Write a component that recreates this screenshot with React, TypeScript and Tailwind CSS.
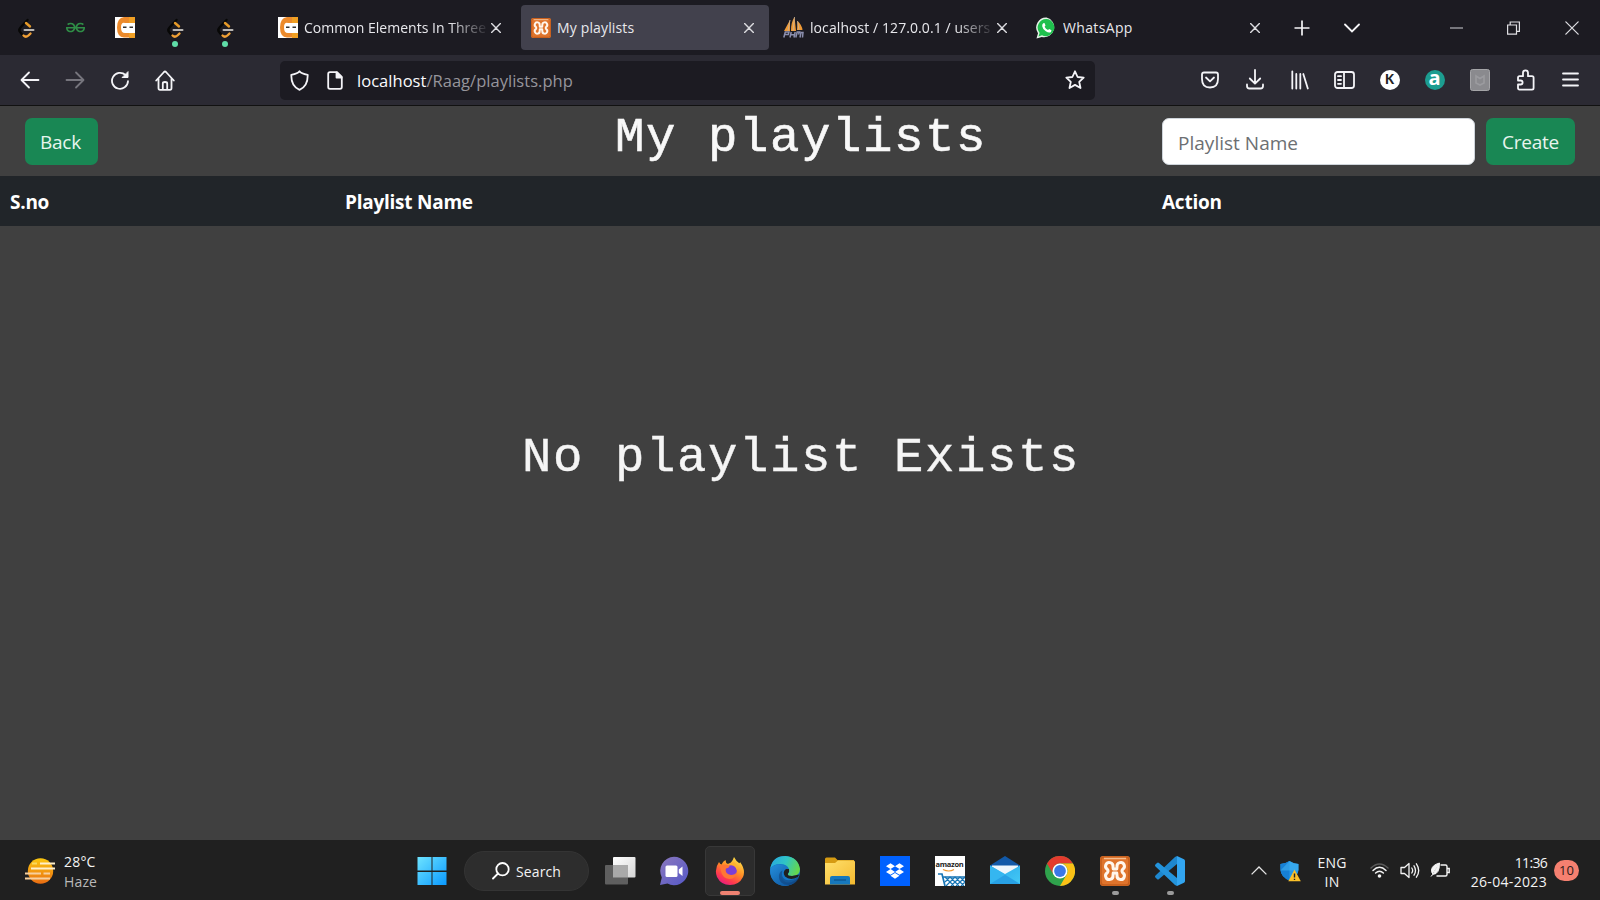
import React from 'react';
import { SiGeeksforgeeks } from 'react-icons/si';
import { FaDropbox } from 'react-icons/fa';

const ui = "font-['Open_Sans','Noto_Sans',sans-serif]";

function LeetCode() {
  return (
    <svg width="20" height="22" viewBox="0 0 20 22" fill="none" strokeLinecap="round" strokeWidth="2.4">
      <path d="M10.500 2 3.500 9.500Q1 12 3.500 14.500L6 17.500" stroke="#070706" />
      <path d="M9 5 13 8.500" stroke="#e69a28" />
      <path d="M6.500 17.500Q9 20 12 17L13.500 15.500" stroke="#f0a036" />
      <path d="M7.500 12H16.500" stroke="#b9b7b5" strokeWidth="2" />
    </svg>
  );
}

function CodingNinjas() {
  return (
    <svg width="20" height="21" viewBox="0 0 20 21">
      <rect width="20" height="21" fill="#fff" />
      <path d="M20 0H9Q2 1 2 10.500T9 20.500H20V16H10Q6 16 6 10.500T10 6H20Z" fill="#ec8a2b" />
      <path d="M14 0H20V6H14ZM14 16H20V21H14Z" fill="#f0a024" />
      <path d="M8 10.300H11.500M14.500 10.300H18" stroke="#333" strokeWidth="1.400" />
    </svg>
  );
}

function Xampp({ size }: { size: number }) {
  return (
    <svg width={size} height={size} viewBox="0 0 30 30">
      <rect width="30" height="30" rx="3" fill="#df742c" />
      <rect x="1" y="1" width="28" height="28" rx="3" fill="none" stroke="#c55d1b" strokeWidth="1.500" />
      <path d="M4 2.500H26" stroke="#f5bd8f" strokeWidth="1.500" />
      <path
        d="M13.200 13H16.800L17 10.500A3.700 3.700 0 1 1 22.700 13.300Q21.300 15 22.700 16.700A3.700 3.700 0 1 1 17 19.500L16.800 17H13.200L13 19.500A3.700 3.700 0 1 1 7.300 16.700Q8.700 15 7.300 13.300A3.700 3.700 0 1 1 13 10.500Z"
        fill="none" stroke="#fff6ec" strokeWidth="3" strokeLinejoin="round"
      />
    </svg>
  );
}

function PhpMyAdmin() {
  return (
    <svg width="21" height="21" viewBox="0 0 21 21">
      <path d="M1 14 7 3V14ZM8 14C8 8 9 4 11.500 0L13 14ZM14 13 14.500 4Q19 8 19.500 13Z" fill="#ef9a36" />
      <path d="M7 3 5 14M11.500 0 10 14M14.500 4 16 13" stroke="#c8b6a0" strokeWidth=".8" />
      <path d="M.8 20.500 2.300 15H6L5.300 17.500H2M7 20.500 8.200 15M11 20.500 12.200 15M7.500 17.700H11.500M12.800 20.500 14.200 15H16.500L15.500 17.500M17 20.500 18 15.500H20L19.500 20.500" fill="none" stroke="#8b8fae" strokeWidth="1.500" />
    </svg>
  );
}

function WhatsApp() {
  return (
    <svg width="21" height="22" viewBox="0 0 21 22">
      <path d="M10.500.500A10 10 0 1 1 5.800 20L.5 21.500 2 16.200A10 10 0 0 1 10.500.500Z" fill="#e6f5e9" />
      <path d="M10.500 2A8.600 8.600 0 1 1 6 18.300L2.500 19.500 3.600 16A8.600 8.600 0 0 1 10.500 2Z" fill="#1fc04d" />
      <path d="M7.200 6.200 8.500 6 9.500 8.500 8.600 9.700Q9.700 12 12 13L13.200 12 15.500 13.200 15 15Q13 16.500 9.800 14.300T6.200 9.200Q6 7.200 7.200 6.200Z" fill="#fff" />
    </svg>
  );
}

function Cross({ size = 10, w = 1.4 }: { size?: number; w?: number }) {
  return (
    <svg width={size} height={size} viewBox="0 0 10 10" stroke="#dcdce0" strokeWidth={w} strokeLinecap="round">
      <path d="M.6.600 9.400 9.400M9.400.600.600 9.400" />
    </svg>
  );
}

function Tab({ icon, title, active, fade, track }: { icon: React.ReactNode; title: string; active?: boolean; fade?: boolean; track: string }) {
  return (
    <div className={`flex h-[45px] w-[248px] shrink-0 items-center rounded-[4px] pl-[9px] pr-[15px] ${active ? 'bg-[#42414d]' : ''}`}>
      <span className="flex w-[21px] shrink-0 justify-center">{icon}</span>
      <span
        className={`ml-[6px] w-[182px] overflow-hidden whitespace-nowrap text-[14px] leading-5 text-[#e8e8ec] ${track} ${fade ? '[mask-image:linear-gradient(to_right,black_80%,transparent_102%)]' : ''}`}
      >
        {title}
      </span>
      <span className="ml-[5px]"><Cross /></span>
    </div>
  );
}

function TabStrip() {
  return (
    <div className="flex h-[55px] shrink-0 items-center bg-[#1c1b22]">
      <div className="ml-px flex h-full">
        <div className="flex w-[50px] items-center justify-center pl-[2px] pt-[2px]"><LeetCode /></div>
        <div className="flex w-[50px] items-center justify-center pr-[2px]"><SiGeeksforgeeks size={19} color="#2f8d46" /></div>
        <div className="flex w-[48px] items-center justify-center"><CodingNinjas /></div>
        {[0, 1].map((i) => (
          <div key={i} className="relative flex w-[50px] items-center justify-center pl-[4px] pt-[2px]">
            <LeetCode />
            <span className="absolute bottom-[8px] left-[23px] size-[6px] rounded-full bg-[#5fdda8]" />
          </div>
        ))}
      </div>
      <div className="ml-[19px] flex gap-[5px]">
        <Tab icon={<CodingNinjas />} title="Common Elements In Three" fade track="tracking-[0.020px]" />
        <Tab icon={<Xampp size={20} />} title="My playlists" active track="tracking-[0.150px]" />
        <Tab icon={<PhpMyAdmin />} title="localhost / 127.0.0.1 / users" fade track="tracking-[0.080px]" />
        <Tab icon={<WhatsApp />} title="WhatsApp" track="tracking-[0.350px]" />
      </div>
      <div className="flex w-[54px] justify-center">
        <svg width="16" height="16" viewBox="0 0 16 16" stroke="#f4f4f6" strokeWidth="1.700"><path d="M8 .5V15.500M.5 8H15.500" /></svg>
      </div>
      <div className="flex w-[46px] justify-center">
        <svg width="16" height="10" viewBox="0 0 16 10" fill="none" stroke="#f4f4f6" strokeWidth="1.800" strokeLinecap="round"><path d="M1 1.500 8 8.500 15 1.500" /></svg>
      </div>
      <div className="ml-auto flex items-center">
        <svg className="mr-[44px]" width="13" height="2"><path d="M0 1H13" stroke="#a9a9ad" strokeWidth="1.300" /></svg>
        <svg className="mr-[45px]" width="13" height="14" viewBox="0 0 13 14" fill="none" stroke="#dedee2" strokeWidth="1.200"><path d="M.6 4H9.500V13.200H.6ZM3.200 4V1H12.400V10.300H9.500" /></svg>
        <span className="mr-[21px]"><Cross size={14} w={0.9} /></span>
      </div>
    </div>
  );
}

function Slot({ w, children }: { w: string; children: React.ReactNode }) {
  return <span className={`flex shrink-0 items-center justify-center ${w}`}>{children}</span>;
}

const line = { fill: 'none', stroke: '#f4f4f8', strokeWidth: 1.8, strokeLinecap: 'round', strokeLinejoin: 'round' } as const;

function Toolbar() {
  return (
    <div className="flex h-[50px] shrink-0 items-center bg-[#2b2a33]">
      <div className="ml-[7px] flex">
        <Slot w="w-[45px]"><svg width="20" height="18" viewBox="0 0 20 18" {...line}><path d="M18.500 9H1.800M9 1.500 1.500 9 9 16.500" /></svg></Slot>
        <Slot w="w-[45px]"><svg width="20" height="18" viewBox="0 0 20 18" {...line} stroke="#76757d"><path d="M1.500 9H18.200M11 1.500 18.500 9 11 16.500" /></svg></Slot>
        <Slot w="w-[45px]">
          <svg width="20" height="20" viewBox="0 0 20 20" {...line} strokeWidth="1.800"><path d="M18 11.200A8 8 0 1 1 15.500 5" /><path d="M18 2V7.500H12.500Z" fill="#f4f4f8" strokeWidth="1" /></svg>
        </Slot>
        <Slot w="w-[45px]">
          <svg width="20" height="21" viewBox="0 0 20 21" {...line}><path d="M1.200 10.500 9 2Q10 1 11 2L18.800 10.500M3.500 8.500V18Q3.500 19.800 5 19.800H15Q16.500 19.800 16.500 18V8.500M7.800 19.500V13.500Q7.800 12 10 12T12.200 13.500V19.500" /></svg>
        </Slot>
      </div>
      <div className="ml-[93px] flex h-[39px] w-[815px] items-center rounded-[5px] bg-[#1c1b22]">
        <Slot w="w-[39px]">
          <svg width="19" height="21" viewBox="0 0 19 21" {...line}><path d="M9.500 1.200Q11 3.500 17.700 4.800Q18 16.500 9.500 19.800Q1 16.500 1.300 4.800Q8 3.500 9.500 1.200Z" /></svg>
        </Slot>
        <Slot w="w-[31px]">
          <svg width="16" height="19" viewBox="0 0 16 19" {...line}><path d="M3 1.200H10L14.800 6V16Q14.800 17.800 13 17.800H3Q1.200 17.800 1.200 16V3Q1.200 1.200 3 1.200Z" /><path d="M9.500 1.500V6.500H14.500Z" fill="#f4f4f8" /></svg>
        </Slot>
        <span className="ml-[7px] whitespace-nowrap pt-[2px] text-[16.500px] tracking-[0.030px] text-[#96959c]">
          <span className="text-[#fbfbfe]">localhost</span>/Raag/playlists.php
        </span>
        <svg className="ml-auto mr-[10px]" width="20" height="20" viewBox="0 0 20 20" {...line}><path d="M10 1.300 12.600 7 18.700 7.600 14.200 11.800 15.500 18 10 14.900 4.500 18 5.800 11.800 1.300 7.600 7.400 7Z" /></svg>
      </div>
      <div className="ml-auto mr-[8px] flex">
        <Slot w="w-[45px]"><svg width="18" height="18" viewBox="0 0 18 18" {...line}><path d="M3 1.500H15Q17 1.500 17 3.500V8Q17 16.500 9 16.500T1 8V3.500Q1 1.500 3 1.500ZM5 6.500 9 10.300 13 6.500" /></svg></Slot>
        <Slot w="w-[45px]"><svg className="-mt-[2px]" width="18" height="21" viewBox="0 0 18 21" {...line}><path d="M9 1V14.500M3.800 9.500 9 14.700 14.200 9.500M1 15.500V17Q1 19.500 3.500 19.500H14.500Q17 19.500 17 17V15.500" /></svg></Slot>
        <Slot w="w-[45px]"><svg width="18" height="20" viewBox="0 0 18 20" {...line}><path d="M1.300 1.300V18.500M5.300 4V18.500M9.300 4V18.500M12.300 4 16.800 18.500" /></svg></Slot>
        <Slot w="w-[45px]"><svg width="21" height="18" viewBox="0 0 21 18" {...line}><rect x="1" y="1" width="19" height="16" rx="2.500" /><path d="M10 1V17M4 5.200H7M4 9H7M4 12.800H7" /></svg></Slot>
        <Slot w="w-[45px]"><span className="flex size-[20px] items-center justify-center rounded-full bg-white font-['Lato',sans-serif] text-[13px] font-black text-[#222]">K</span></Slot>
        <Slot w="w-[45px]"><span className="flex size-[20px] items-center justify-center rounded-full bg-[#1c9d90] pb-[4px] text-[20px] font-bold leading-none text-white">a</span></Slot>
        <Slot w="w-[45px]">
          <svg width="20" height="22" viewBox="0 0 20 22"><rect x=".5" y=".5" width="19" height="21" rx="2" fill="#8a8a8e" stroke="#a5a5a8" /><path d="M6 7V14L10 16 14 14V7L10 9.500Z" fill="none" stroke="#9b9b9f" strokeWidth="1.600" /></svg>
        </Slot>
        <Slot w="w-[46px]">
          <svg width="19" height="22" viewBox="0 0 19 22" {...line}><path d="M7 7.200V3.800Q7 1.300 9.500 1.300T12 3.800V7.200H16Q17.600 7.200 17.600 8.800V19Q17.600 20.600 16 20.600H3.500Q2 20.600 2 19V15.500H4.500Q6.600 15.500 6.600 13.500T4.500 11.500H2V8.800Q2 7.200 3.500 7.200Z" /></svg>
        </Slot>
        <Slot w="w-[44px]"><svg className="-mt-[2px]" width="17" height="15" viewBox="0 0 17 15" {...line}><path d="M1 1.500H16M1 7.500H16M1 13.500H16" /></svg></Slot>
      </div>
    </div>
  );
}

function Page() {
  return (
    <main className="flex min-h-0 flex-1 flex-col border-t border-[#111] bg-[#404040]">
      <header className="grid h-[70px] shrink-0 grid-cols-[1fr_auto_1fr] items-center pl-[25px] pr-[25px]">
        <button className="h-[47px] w-[73px] justify-self-start rounded-[7px] bg-[#198754] pr-[2px] pt-[3px] text-[19px] tracking-[-0.200px] text-[#e8f5ee]">Back</button>
        <h1 className="whitespace-pre pb-[5px] pl-[2px] font-['Liberation_Mono',monospace] text-[49px] leading-none tracking-[1.600px] text-[#f8f8f8] [-webkit-text-stroke:0.6px_#f8f8f8]">My playlists</h1>
        <div className="flex justify-self-end">
          <input placeholder="Playlist Name" className="h-[47px] w-[313px] rounded-[7px] border border-[#ced4da] bg-white px-[15px] pt-[3px] text-[19px] tracking-[0.020px] placeholder:text-[#6c6f72]" />
          <button className="ml-[11px] h-[47px] w-[89px] rounded-[7px] bg-[#198754] pt-[3px] text-[19px] tracking-[-0.200px] text-[#e8f5ee]">Create</button>
        </div>
      </header>
      <div className="grid h-[50px] shrink-0 grid-cols-[335px_817px_1fr] items-center bg-[#212529] pl-[10px] pt-[2px] text-[19px] font-bold tracking-[-0.250px] text-white">
        <span>S.no</span>
        <span>Playlist Name</span>
        <span>Action</span>
      </div>
      <div className="flex flex-1 justify-center pt-[208px]">
        <h2 className="whitespace-pre pl-[2px] font-['Liberation_Mono',monospace] text-[49px] leading-none tracking-[1.600px] text-[#f5f5f5] [-webkit-text-stroke:0.4px_#f5f5f5]">No playlist Exists</h2>
      </div>
    </main>
  );
}

function Firefox() {
  return (
    <svg width="30" height="30" viewBox="0 0 30 30">
      <defs>
        <linearGradient id="fx" x1=".8" y1="0" x2=".2" y2="1"><stop offset="0" stopColor="#ffe84a" /><stop offset=".45" stopColor="#ff8a25" /><stop offset=".75" stopColor="#ff3b4d" /><stop offset="1" stopColor="#e3168c" /></linearGradient>
      </defs>
      <path d="M19 1Q21 5 24 7Q25 7.500 25 6Q31 14 28 21Q24 29 15 29T2 21Q-1 13 4 6Q5 8 6.500 8.500Q8 5 10.500 4Q10.500 7 13 8Q17 7 19 1Z" fill="url(#fx)" />
      <circle cx="16" cy="15" r="5.800" fill="#7b3fd6" />
      <path d="M5 10Q10 7 14.500 10Q14 12 10.500 12.500Q10 18 16 19Q20 19 22 16Q21 23 14.500 23Q7 22 6 15Z" fill="#ff7634" />
      <path d="M13 8Q20 7 22 14Q24 10 19 6Z" fill="#ffb32e" />
    </svg>
  );
}

function Edge() {
  return (
    <svg width="30" height="30" viewBox="0 0 30 30">
      <defs>
        <linearGradient id="eg" x1="0" y1=".2" x2="1" y2=".5"><stop offset="0" stopColor="#28a7df" /><stop offset=".5" stopColor="#30c5c5" /><stop offset="1" stopColor="#65d84c" /></linearGradient>
        <linearGradient id="eb" x1="0" y1="0" x2="1" y2="1"><stop offset="0" stopColor="#258fdc" /><stop offset="1" stopColor="#0a4d96" /></linearGradient>
      </defs>
      <circle cx="15" cy="15" r="15" fill="#1478c9" />
      <path d="M.2 13Q2 0 15.500 0Q28 1 30 13Q30 20 22 20Q17 20 18 17.500Q20 16 19 13Q17 8 10 8Q3 8 .2 13Z" fill="url(#eg)" />
      <path d="M.2 13Q5 7 12 9Q18 10 19 15Q15 11 12 15Q9 20 14 25Q18 28 24 25L27.500 23Q23 30 14 30Q0 28 .2 13Z" fill="url(#eb)" />
      <path d="M12.500 14.500Q10.500 20 15 23.500Q20 26 28.200 21L29 22Q26 28 20 29Q8 29 9 19Q10 15 12.500 14.500Z" fill="#103f78" opacity=".55" />
      <path d="M19 13Q19.500 16 18 17.500Q17 20 22 20L29.300 18.500L28 21Q20 25 15 20.500Q12 16 16 13Z" fill="#202020" />
    </svg>
  );
}

function Chrome() {
  return (
    <svg width="30" height="30" viewBox="0 0 30 30">
      <circle cx="15" cy="15" r="15" fill="#2fa24c" />
      <path d="M2 7.500A15 15 0 0 1 28 7.500H15A7.500 7.500 0 0 0 8.500 18.700Z" fill="#e33b2e" />
      <path d="M28 7.500A15 15 0 0 1 15 30L21.500 18.800A7.500 7.500 0 0 0 15 7.500Z" fill="#fbc116" />
      <circle cx="15" cy="15" r="7.500" fill="#fff" /><circle cx="15" cy="15" r="5.900" fill="#3b78e7" />
    </svg>
  );
}

function Running({ children }: { children: React.ReactNode }) {
  return (
    <span className="relative flex">
      {children}
      <span className="absolute -bottom-[9px] left-[12px] h-[4px] w-[7px] rounded-full bg-[#9b9b9b]" />
    </span>
  );
}

function Taskbar() {
  return (
    <footer className="flex h-[60px] shrink-0 items-center bg-[#202020] pt-px text-[#f4f4f4]">
      <div className="flex w-[414px] items-center pl-[25px]">
        <svg width="31" height="26" viewBox="0 0 31 26">
          <defs><linearGradient id="sun" x1="0" y1="0" x2="0" y2="1"><stop offset="0" stopColor="#fbc70f" /><stop offset="1" stopColor="#e96d13" /></linearGradient></defs>
          <circle cx="15.500" cy="13" r="12.700" fill="url(#sun)" />
          <path d="M15 5.500H30M6 10.500H30" stroke="#fff0ca" strokeWidth="2.200" />
          <path d="M0 15.500H16M18.500 15.500H25M0 20.500H25" stroke="#f7cf9d" strokeWidth="2.200" />
          <path d="M7 5.500H12" stroke="#fbd95d" strokeWidth="2" />
        </svg>
        <div className="ml-[8px] pt-[2px] text-[14px] leading-[20px]">
          <div className="tracking-[0.200px]">28°C</div>
          <div className="tracking-[0.150px] text-[#b9b9b9]">Haze</div>
        </div>
      </div>
      <div className="flex h-full items-center">
        <span className="mr-[14px] flex w-[36px] justify-center">
          <svg width="30" height="30" viewBox="0 0 30 30">
            <defs><linearGradient id="win" gradientUnits="userSpaceOnUse" x1="0" y1="0" x2="30" y2="30"><stop offset="0" stopColor="#70e5ff" /><stop offset="1" stopColor="#0797ff" /></linearGradient></defs>
            <path d="M.5 1H14.500V14.500H.5ZM15.500 1H29.500V14.500H15.500ZM.5 16H14.500V29H.5ZM15.500 16H29.500V29H15.500Z" fill="url(#win)" />
          </svg>
        </span>
        <div className="mr-[3px] flex h-[40px] w-[125px] items-center rounded-full border border-[#343434] bg-[#2d2d2d] pl-[27px]">
          <svg width="18" height="18" viewBox="0 0 18 18" fill="none" stroke="#fff" strokeWidth="1.800" strokeLinecap="round"><circle cx="10.500" cy="7.200" r="6.200" /><path d="M6 11.500 1 16.500" /></svg>
          <span className="ml-[6px] pt-px text-[14px] tracking-[0.120px]">Search</span>
        </div>
        <Slot w="w-[55px]">
          <svg className="ml-px" width="31" height="28" viewBox="0 0 31 28">
            <defs><linearGradient id="tv" x1="0" y1="0" x2="1" y2="1"><stop offset="0" stopColor="#fff" /><stop offset="1" stopColor="#d5d5d5" /></linearGradient></defs>
            <rect x="8" width="22.500" height="20.500" rx="1" fill="url(#tv)" /><rect y="8" width="23" height="19.500" rx="1" fill="#5f5f5f" /><path d="M8 8H23V20.500H8Z" fill="#a9a9a9" />
          </svg>
        </Slot>
        <Slot w="w-[55px]">
          <svg className="-ml-px" width="30" height="30" viewBox="0 0 30 30">
            <defs><linearGradient id="ch" x1="0" y1="0" x2="1" y2="1"><stop offset="0" stopColor="#8b78bd" /><stop offset="1" stopColor="#5558c8" /></linearGradient></defs>
            <path d="M15 .8A14.200 14.200 0 1 1 8.500 27.600L1 29 2.800 21.500A14.200 14.200 0 0 1 15 .8Z" fill="url(#ch)" /><rect x="6.500" y="9.500" width="12" height="11.500" rx="1.500" fill="#fff" /><path d="M19.800 13.500 23.500 10.500V20L19.800 17Z" fill="#fff" />
          </svg>
        </Slot>
        <span className="relative mx-[2.500px] flex size-[50px] items-center justify-center rounded-[5px] border border-[#383838] bg-[#2c2c2c]">
          <Firefox />
          <span className="absolute bottom-0 left-[14px] h-[4px] w-[20px] rounded-full bg-[#ef8272]" />
        </span>
        <Slot w="w-[55px]"><Edge /></Slot>
        <Slot w="w-[55px]">
          <svg width="30" height="28" viewBox="0 0 30 28">
            <defs><linearGradient id="fo" x1="0" y1="0" x2="1" y2="1"><stop offset="0" stopColor="#ffe06c" /><stop offset="1" stopColor="#f4b92f" /></linearGradient></defs>
            <path d="M0 2Q0 .5 1.500.500H10L12.500 3H29V12H0Z" fill="#d69b12" /><path d="M0 6H10L13 3.500H28.500Q30 3.500 30 5V27.500H0Z" fill="url(#fo)" /><path d="M5 27.500V21Q5 19 7 19H23Q25 19 25 21V27.500Z" fill="#1678bd" /><path d="M9 23H21" stroke="#0d548e" strokeWidth="1.300" />
          </svg>
        </Slot>
        <Slot w="w-[55px]"><span className="flex size-[30px] items-center justify-center bg-[#0061fe]"><FaDropbox size={18} color="#fff" /></span></Slot>
        <Slot w="w-[55px]">
          <span className="flex size-[30px] flex-col items-center overflow-hidden bg-white">
            <span className="mt-[3px] text-[7.500px] font-bold leading-[10px] tracking-[-0.300px] text-[#222]">amazon</span>
            <svg width="30" height="17" viewBox="0 0 30 17"><path d="M8 .5Q14 3.500 19 .5" fill="none" stroke="#ef962e" strokeWidth="1.100" /><path d="M3 5H7L10 17M8 8H30" fill="none" stroke="#1976b5" strokeWidth="1.700" /><path d="M10 8 19 17M15 8 24 17M20 8 29 17M25 8 30 13M30 8 21 17M25 8 16 17M20 8 11 17M15 8 10 13M30 13 26 17" stroke="#1976b5" strokeWidth="1.300" /></svg>
          </span>
        </Slot>
        <Slot w="w-[55px]">
          <svg width="30" height="30" viewBox="0 0 30 30">
            <defs><linearGradient id="ml" x1="0" y1="0" x2="1" y2="1"><stop offset="0" stopColor="#2aa9eb" /><stop offset="1" stopColor="#44c9f5" /></linearGradient></defs>
            <path d="M0 9.500 15 0 30 9.500V12H0Z" fill="#1259a8" /><path d="M2 9.500H28V20H2Z" fill="#eef6fc" /><path d="M0 9.500 15 18 30 9.500V28H0Z" fill="url(#ml)" /><path d="M0 9.500 30 28H0Z" fill="#35b6f0" /><path d="M15 18.700 30 28H0Z" fill="#1f92dd" opacity=".6" />
          </svg>
        </Slot>
        <Slot w="w-[55px]"><Chrome /></Slot>
        <Slot w="w-[55px]"><Running><Xampp size={30} /></Running></Slot>
        <Slot w="w-[55px]">
          <Running>
            <svg width="30" height="30" viewBox="0 0 30 30"><path d="M22 8 4 23Q3 24 2 23L.4 21.500Q-.4 20.500.5 19.500L20 1 22 0V8Z" fill="#1e87ce" /><path d="M22 22 4 7Q3 6 2 7L.4 8.500Q-.4 9.500.5 10.500L20 29 22 30V22Z" fill="#2494dc" /><path d="M22 0 29 3.300Q30 4 30 5V25Q30 26 29 26.700L22 30V0Z" fill="#32a5f0" /></svg>
          </Running>
        </Slot>
      </div>
      <div className="ml-auto flex items-center">
        <svg width="16" height="9" viewBox="0 0 16 9" fill="none" stroke="#e5e5e5" strokeWidth="1.300"><path d="M.6 8.400 8 1 15.400 8.400" /></svg>
        <svg className="ml-[13px]" width="21" height="22" viewBox="0 0 21 22">
          <path d="M9.500 1Q13 3.500 18.500 4V10Q18 17 9.500 20.500Q1 17 .5 10V4Q6 3.500 9.500 1Z" fill="#2498e8" /><path d="M9.500 1V20.500Q1 17 .5 10V4Q6 3.500 9.500 1Z" fill="#1680d5" /><path d="M.5 10.500H18.500V4Q13 3.500 9.500 1" fill="#48b8f4" opacity=".5" /><path d="M14.500 9.500 20.800 21.200H8.300Z" fill="#fbc129" /><path d="M14.500 13.500V17.500M14.500 18.700V20" stroke="#222" strokeWidth="1.400" />
        </svg>
        <div className="ml-[13px] w-[36px] pt-[2px] text-center text-[14px] leading-[19px] tracking-[0.150px]"><div>ENG</div><div>IN</div></div>
        <svg className="ml-[20px]" width="19" height="16" viewBox="0 0 19 16" fill="none" stroke="#f4f4f4" strokeWidth="1.500" strokeLinecap="round"><path d="M1 5Q9.500-3 18 5" stroke="#5b5b5b" /><path d="M3 7.500Q9.500 1 16 7.500M5.600 10Q9.500 6.500 13.400 10" /><circle cx="9.500" cy="13" r="1.800" fill="#f4f4f4" stroke="none" /></svg>
        <svg className="ml-[11px]" width="20" height="17" viewBox="0 0 20 17" fill="none" stroke="#f4f4f4" strokeWidth="1.300" strokeLinecap="round" strokeLinejoin="round"><path d="M1 5.500H4.500L9 1.500V15.500L4.500 11.500H1ZM11.800 6Q13.500 8.500 11.800 11M14 3.800Q17 8.500 14 13.200M16.400 1.800Q21 8.500 16.400 15.200" /></svg>
        <svg className="ml-[10px]" width="20" height="17" viewBox="0 0 20 17" fill="none" stroke="#f4f4f4" strokeWidth="1.400"><path d="M10.500 3H15.500Q17 3 17 4.500V12.500Q17 14 15.500 14H6.500M17.200 6.500H19.200V10.500H17.200" /><path d="M9.500 1Q2 3 1.500 8Q1.500 11 3 12.200L1 14.500M3 12.200Q9.500 12.500 9.500 1Z" fill="#f4f4f4" strokeWidth="1" /></svg>
        <div className="ml-[13px] w-[84px] whitespace-nowrap pt-[2px] text-right text-[14px] leading-[19px]"><div className="tracking-[-0.700px]">11:36</div><div className="tracking-[0.330px]">26-04-2023</div></div>
        <span className="ml-[7px] mr-[21px] flex h-[21px] w-[25px] items-center justify-center rounded-full bg-[#f58070] text-[13px] leading-none text-[#2c1a18]">10</span>
      </div>
    </footer>
  );
}

export default function App() {
  return (
    <div className={`flex h-[900px] w-[1600px] flex-col overflow-hidden ${ui}`}>
      <TabStrip />
      <Toolbar />
      <Page />
      <Taskbar />
    </div>
  );
}
